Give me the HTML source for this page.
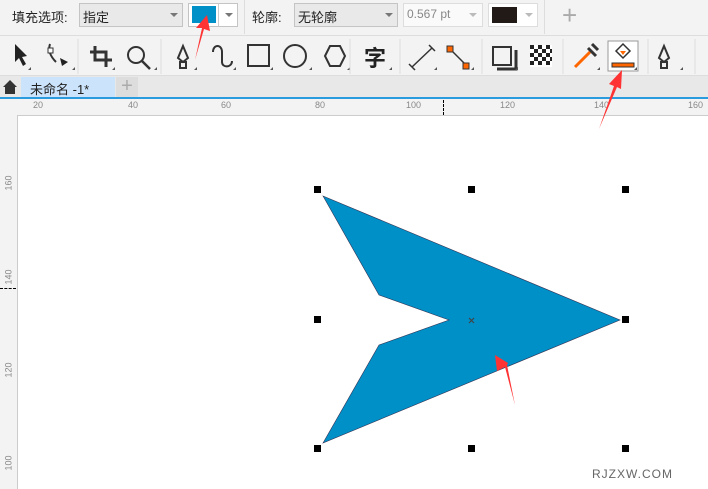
<!DOCTYPE html>
<html><head><meta charset="utf-8"><style>
body{margin:0;width:708px;height:489px;overflow:hidden;background:#f3f3f3;font-family:"Liberation Sans","Noto Sans CJK SC",sans-serif;position:relative}
.a{position:absolute}
.t{font-size:13px;color:#222}
.box{position:absolute;border:1px solid #c4c4c4;background:#e9e9e9;box-sizing:border-box}
.dd{position:absolute;width:0;height:0;border-left:4px solid transparent;border-right:4px solid transparent;border-top:4px solid #777}
.rl{font-size:9px;color:#888}
</style></head><body>
<!-- toolbar 1 -->
<div class="a t" style="left:12px;top:7px">填充选项:</div>
<div class="box" style="left:79px;top:3px;width:104px;height:24px"></div>
<div class="a t" style="left:83px;top:7px">指定</div>
<div class="dd" style="left:170px;top:13px"></div>
<div class="box" style="left:188px;top:3px;width:50px;height:24px;background:#fff"></div>
<div class="a" style="left:192px;top:6px;width:24px;height:17px;background:#0090c8"></div>
<div class="a" style="left:218px;top:4px;width:1px;height:22px;background:#ccc"></div>
<div class="dd" style="left:225px;top:13px"></div>
<div class="a" style="left:244px;top:0;width:1px;height:34px;background:#ddd"></div>
<div class="a t" style="left:252px;top:7px">轮廓:</div>
<div class="box" style="left:294px;top:3px;width:104px;height:24px"></div>
<div class="a t" style="left:298px;top:7px">无轮廓</div>
<div class="dd" style="left:385px;top:13px"></div>
<div class="box" style="left:403px;top:3px;width:80px;height:24px;background:#fafafa;border-color:#ddd"></div>
<div class="a" style="left:407px;top:7px;font-size:12px;color:#888">0.567 pt</div>
<div class="dd" style="left:469px;top:13px;border-top-color:#bbb"></div>
<div class="box" style="left:488px;top:3px;width:50px;height:24px;background:#fff;border-color:#ddd"></div>
<div class="a" style="left:492px;top:7px;width:25px;height:16px;background:#221a16"></div>
<div class="dd" style="left:525px;top:13px;border-top-color:#bbb"></div>
<div class="a" style="left:544px;top:0;width:1px;height:34px;background:#ddd"></div>
<div class="a" style="left:562px;top:5px;font-size:26px;color:#aaa;line-height:20px">+</div>
<div class="a" style="left:0;top:35px;width:708px;height:1px;background:#ddd"></div>
<!-- toolbar 2 icons -->
<svg class="a" style="left:0;top:36px" width="708" height="40" fill="none" stroke="#333" stroke-width="2">
<path d="M15 8 L15 26 L19 22 L23 30 L26 28 L22 21 L27 20 Z" fill="#222" stroke="none"/>
<path d="M50 8 C48 14 50 20 56 26" /><rect x="48" y="12" width="5" height="5" fill="#fff" stroke-width="1"/><path d="M60 22 L68 26 L62 30Z" fill="#222" stroke="none"/>
<path d="M95 10 V24 H112 M90 16 H106 V31" stroke-width="3"/>
<circle cx="136" cy="19" r="8"/><path d="M142 25 L150 33" stroke-width="2.5"/>
<path d="M183 10 L188 22 L183 26 L178 22 Z M180 26 H186 V32 H180Z"/>
<path d="M213 16 C213 8 222 8 222 16 L222 26 C222 32 232 32 232 25" />
<rect x="248" y="9" width="21" height="21"/>
<circle cx="295" cy="20" r="11"/>
<path d="M325 20 L330 10 H340 L345 20 L340 30 H330 Z"/>
<text x="364" y="30" font-size="22" font-weight="bold" fill="#222" stroke="none" font-family="Noto Sans CJK SC">字</text>
<path d="M412 31 L432 12 M409 28 L415 34 M429 9 L435 15" stroke-width="1.5"/>
<path d="M450 13 L466 29" stroke-width="1.5"/><rect x="447" y="10" width="6" height="6" fill="#f60" stroke-width="1"/><rect x="463" y="27" width="6" height="6" fill="#f60" stroke-width="1"/>
<rect x="493" y="11" width="18" height="18"/><path d="M497 33 H516 V14" stroke-width="3"/>
<rect x="530" y="9" width="22" height="22" fill="#fff" stroke="none"/>
<path d="M530 9h4v4h-4zM538 9h4v4h-4zM546 9h4v4h-4zM534 13h4v4h-4zM542 13h4v4h-4zM550 13h2v4h-2zM530 17h4v4h-4zM538 17h4v4h-4zM546 17h4v4h-4zM534 21h4v4h-4zM542 21h4v4h-4zM550 21h2v4h-2zM530 25h4v4h-4zM538 25h4v4h-4zM546 25h4v4h-4z" fill="#222" stroke="none"/>
<path d="M575 31 L590 16" stroke="#f60" stroke-width="3"/><path d="M588 12 L596 20 M592 8 L598 14" stroke-width="3"/>
<rect x="608" y="5" width="30" height="30" fill="#fff" stroke="#999" stroke-width="1"/>
<path d="M616 15 L623 8 L630 15 L623 22 Z" stroke-width="1.5"/><path d="M620 15 H626 L623 19Z" fill="#f60" stroke="none"/>
<rect x="612" y="27" width="22" height="4" fill="#f60" stroke="#333" stroke-width="1"/>
<path d="M664 10 L669 22 L664 26 L659 22 Z M661 26 H667 V32 H661Z"/>
<g fill="#555" stroke="none"><path d="M28 34h3v-3z M72 34h3v-3z M112 34h3v-3z M154 34h3v-3z M194 34h3v-3z M233 34h3v-3z M270 34h3v-3z M309 34h3v-3z M347 34h3v-3z M389 34h3v-3z M434 34h3v-3z M471 34h3v-3z M515 34h3v-3z M597 34h3v-3z M634 34h3v-3z M680 34h3v-3z"/></g>
<g stroke="#ddd" stroke-width="1"><path d="M78 3V38 M161 3V38 M350 3V38 M400 3V38 M482 3V38 M563 3V38 M648 3V38 M695 3V38"/></g>
</svg>
<div class="a" style="left:0;top:75px;width:708px;height:1px;background:#ddd"></div>
<!-- tab bar -->
<div class="a" style="left:0;top:76px;width:708px;height:21px;background:#e8e8e8"></div>
<svg class="a" style="left:2px;top:79px" width="16" height="16"><path d="M1 8 L8 1 L15 8 H13 V15 H3 V8Z" fill="#333"/></svg>
<div class="a" style="left:21px;top:77px;width:94px;height:20px;background:#cce4fb"></div>
<div class="a t" style="left:30px;top:79px">未命名 -1*</div>
<div class="a" style="left:116px;top:77px;width:22px;height:20px;background:#ddd;color:#aaa;font-size:20px;line-height:19px;text-align:center">+</div>
<div class="a" style="left:0;top:97px;width:708px;height:2px;background:#2b9be0"></div>
<!-- rulers -->
<div class="a" style="left:0;top:99px;width:708px;height:17px;background:#f3f3f3"></div>
<div class="a" style="left:18px;top:115px;width:690px;height:1px;background:#ccc"></div>
<div class="a" style="left:17px;top:115px;width:1px;height:374px;background:#ccc"></div>
<div class="a" style="left:18px;top:116px;width:690px;height:373px;background:#fff"></div>
<div class="a rl" style="left:33px;top:100px">20</div>
<div class="a rl" style="left:128px;top:100px">40</div>
<div class="a rl" style="left:221px;top:100px">60</div>
<div class="a rl" style="left:315px;top:100px">80</div>
<div class="a rl" style="left:406px;top:100px">100</div>
<div class="a rl" style="left:500px;top:100px">120</div>
<div class="a rl" style="left:594px;top:100px">140</div>
<div class="a rl" style="left:688px;top:100px">160</div>
<div class="a" style="left:443px;top:100px;height:15px;border-left:1px dashed #000"></div>
<div class="a rl" style="left:1px;top:178px;transform:rotate(-90deg)">160</div>
<div class="a rl" style="left:1px;top:272px;transform:rotate(-90deg)">140</div>
<div class="a rl" style="left:1px;top:365px;transform:rotate(-90deg)">120</div>
<div class="a rl" style="left:1px;top:458px;transform:rotate(-90deg)">100</div>
<div class="a" style="left:0;top:288px;width:16px;border-top:1px dashed #000"></div>
<!-- canvas -->
<svg class="a" style="left:0;top:0" width="708" height="489">
<polygon points="323,196 620,320 323,443 379,345 449,320 379,295" fill="#0090c8" stroke="#335" stroke-width="0.6"/>
<g fill="#000"><rect x="314" y="186" width="7" height="7"/><rect x="468" y="186" width="7" height="7"/><rect x="622" y="186" width="7" height="7"/><rect x="314" y="316" width="7" height="7"/><rect x="622" y="316" width="7" height="7"/><rect x="314" y="445" width="7" height="7"/><rect x="468" y="445" width="7" height="7"/><rect x="622" y="445" width="7" height="7"/></g>
<path d="M469 318 L474 323 M474 318 L469 323" stroke="#444" stroke-width="1.2"/>
<g fill="#f33"><path d="M195 60 L202 28 L196 28 L207 15 L210 31 L204 29 Z"/><path d="M599 129 L614 86 L609 84 L622 70 L621 89 L617 87 Z"/><path d="M515 405 L505 367 L497 371 L495 355 L508 363 L507 365 Z"/></g>
</svg>
<div class="a" style="left:592px;top:467px;font-size:12px;color:#666;letter-spacing:1px">RJZXW.COM</div>
</body></html>
